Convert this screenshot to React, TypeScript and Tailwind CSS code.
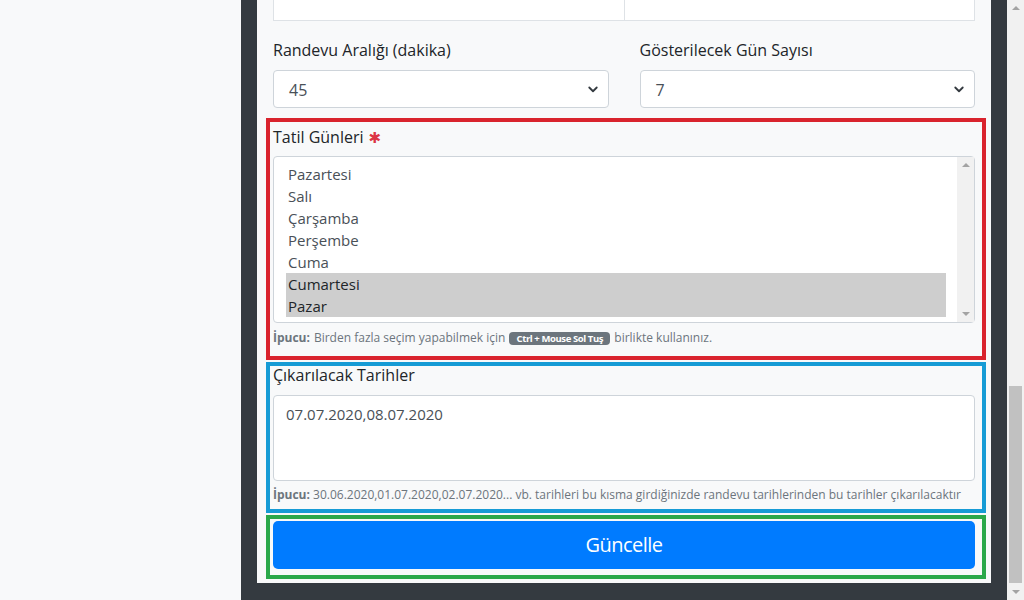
import React from "react";

const days = ["Pazartesi", "Salı", "Çarşamba", "Perşembe", "Cuma", "Cumartesi", "Pazar"];
const selected = ["Cumartesi", "Pazar"];

const Chevron = () => (
  <svg className="w-[12px] h-[12px]" viewBox="0 0 16 16" fill="none">
    <path d="M3 6l5 5 5-5" stroke="#343a40" strokeWidth="2.4" strokeLinecap="round" strokeLinejoin="round" />
  </svg>
);

const SelectBox = ({ value }: { value: string }) => (
  <div className="flex items-center justify-between h-[38px] bg-white border border-[#ced4da] rounded-[4px] pl-[15px] pr-[9px] text-[16px] text-[#495057]">
    <span className="mt-[1px]">{value}</span>
    <Chevron />
  </div>
);

const Arrow = ({ up }: { up?: boolean }) => (
  <div
    className={
      up
        ? "w-0 h-0 border-x-[4px] border-x-transparent border-b-[4px] border-b-[#a3a3a3]"
        : "w-0 h-0 border-x-[4px] border-x-transparent border-t-[4px] border-t-[#a3a3a3]"
    }
  />
);

export default function App() {
  return (
    <div
      className="flex w-[1024px] h-[600px] overflow-hidden bg-[#f8f9fa]"
      style={{ fontFamily: "'Open Sans', 'Noto Sans', sans-serif" }}
    >
      {/* left empty area */}
      <div className="w-[241px] shrink-0 bg-[#f8f9fa]" />

      {/* dark frame around the form panel */}
      <div className="w-[766px] shrink-0 bg-[#343a40] px-[16px] pb-[17px] flex flex-col">
        <div className="flex-1 bg-[#f8f9fa] flex flex-col">
          {/* inputs cut off at the top */}
          <div className="flex px-[16px]">
            <div className="flex-1 h-[21px] bg-white border-x border-b border-[#dee2e6]" />
            <div className="flex-1 h-[21px] bg-white border-r border-b border-[#dee2e6]" />
          </div>

          <div className="grid grid-cols-2 gap-[31px] px-[16px] pt-[17px]">
            <div className="flex flex-col">
              <label className="text-[16px] leading-[24px] text-[#212529] mb-[8px]">Randevu Aralığı (dakika)</label>
              <SelectBox value="45" />
            </div>
            <div className="flex flex-col">
              <label className="text-[16px] leading-[24px] text-[#212529] mb-[8px]">Gösterilecek Gün Sayısı</label>
              <SelectBox value="7" />
            </div>
          </div>

          {/* holidays */}
          <div className="ml-[9px] mr-[5px] mt-[10px] border-[4px] border-[#d9232d] pl-[3px] pr-[7px] pt-[3px] pb-[10px]">
            <div className="flex items-center gap-[5px] text-[16px] leading-[24px] text-[#212529]">
              Tatil Günleri
              <span
                className="text-[#dc3545] text-[15px] leading-none mt-[2px]"
                style={{ fontFamily: "'DejaVu Sans', sans-serif" }}
              >
                ✱
              </span>
            </div>
            <div className="mt-[7px] h-[167px] bg-white border border-[#ced4da] rounded-[4px] flex">
              <div className="flex-1 pl-[12px] pr-[11px] pt-[6px]">
                {days.map((d) => (
                  <div
                    key={d}
                    className={
                      selected.includes(d)
                        ? "h-[22px] leading-[22px] pl-[2px] text-[15px] text-[#212529] bg-[#cecece]"
                        : "h-[22px] leading-[22px] pl-[2px] text-[15px] text-[#495057]"
                    }
                  >
                    {d}
                  </div>
                ))}
              </div>
              <div className="w-[17px] bg-[#f1f1f1] flex flex-col items-center justify-between py-[6px]">
                <Arrow up />
                <Arrow />
              </div>
            </div>
            <div className="mt-[7px] text-[12px] leading-[16px] text-[#6c757d] flex items-center gap-[4px]">
              <b>İpucu:</b>
              <span>Birden fazla seçim yapabilmek için</span>
              <span className="w-[101px] text-center bg-[#6c757d] text-white font-bold text-[9.5px] leading-[13px] rounded-[4px] tracking-[-0.4px]">
                Ctrl + Mouse Sol Tuş
              </span>
              <span>birlikte kullanınız.</span>
            </div>
          </div>

          {/* excluded dates */}
          <div className="ml-[9px] mr-[5px] mt-[2px] border-[4px] border-[#169bd5] pl-[3px] pr-[7px] pb-[6px]">
            <div className="text-[16px] leading-[20px] text-[#212529] -mt-[1px]">Çıkarılacak Tarihler</div>
            <div className="mt-[10px] h-[86px] bg-white border border-[#ced4da] rounded-[4px] px-[12px] py-[6px] text-[15px] leading-[24px] text-[#495057]">
              07.07.2020,08.07.2020
            </div>
            <div className="mt-[6px] text-[12px] leading-[16px] text-[#6c757d] whitespace-nowrap">
              <b>İpucu:</b> 30.06.2020,01.07.2020,02.07.2020... vb. tarihleri bu kısma girdiğinizde randevu tarihlerinden bu tarihler çıkarılacaktır
            </div>
          </div>

          {/* submit */}
          <div className="ml-[9px] mr-[5px] mt-[2px] border-[4px] border-[#2aa84a] pl-[3px] pr-[7px] pt-[2px] pb-[6px]">
            <button className="w-full h-[48px] rounded-[5px] bg-[#007bff] text-white text-[20px] tracking-[-0.5px]">
              Güncelle
            </button>
          </div>
        </div>
      </div>

      {/* page scrollbar */}
      <div className="w-[17px] shrink-0 bg-[#f1f1f1] flex flex-col items-center">
        <div className="pt-[6px] h-[386px]">
          <Arrow up />
        </div>
        <div className="w-[13px] h-[197px] bg-[#c1c1c1]" />
        <div className="flex-1 flex items-center">
          <Arrow />
        </div>
      </div>
    </div>
  );
}
